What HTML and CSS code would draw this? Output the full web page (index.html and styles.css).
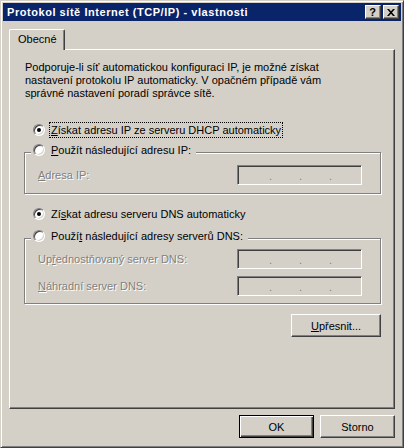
FILE: index.html
```html
<!DOCTYPE html>
<html lang="cs">

<head>
    <meta charset="UTF-8">
    <meta name="viewport" content="width=device-width, initial-scale=1.0">
    <title>Protokol sítě Internet (TCP/IP) - vlastnosti</title>
    <link rel="stylesheet" href="styles.css">
</head>

<body>
    <div class="window">
        <div class="titlebar">
            <span class="title">Protokol sítě Internet (TCP/IP) - vlastnosti</span>
            <div class="tbtns">
                <span class="tbtn help">?</span>
                <span class="tbtn close">
                    <svg width="8" height="7" viewBox="0 0 8 7">
                        <path d="M0 0h2l2 2.2L6 0h2L5 3.5 8 7H6L4 4.8 2 7H0l3-3.5z" fill="#000"/>
                    </svg>
                </span>
            </div>
        </div>

        <div class="client">
            <div class="tabs">
                <div class="tab">Obecné</div>
            </div>

            <div class="panel">
                <p class="intro">Podporuje-li síť automatickou konfiguraci IP, je možné získat nastavení protokolu IP automaticky. V opačném případě vám správné nastavení poradí správce sítě.</p>

                <div class="opt first">
                    <span class="radio checked"></span>
                    <span class="lbl focus"><u>Z</u>ískat adresu IP ze serveru DHCP automaticky</span>
                </div>

                <div class="group g-ip">
                    <div class="opt legend">
                        <span class="radio"></span>
                        <span class="lbl"><u>P</u>oužít následující adresu IP:</span>
                    </div>
                    <div class="field f-ip">
                        <span class="dis"><u>A</u>dresa IP:</span>
                        <div class="ip"><span class="dot">.</span><span class="dot">.</span><span class="dot">.</span></div>
                    </div>
                </div>

                <div class="opt dns-auto">
                    <span class="radio checked"></span>
                    <span class="lbl">Zí<u>s</u>kat adresu serveru DNS automaticky</span>
                </div>

                <div class="group g-dns">
                    <div class="opt legend">
                        <span class="radio"></span>
                        <span class="lbl">Použí<u>t</u> následující adresy serverů DNS:</span>
                    </div>
                    <div class="field f-dns1">
                        <span class="dis">Up<u>ř</u>ednostňovaný server DNS:</span>
                        <div class="ip"><span class="dot">.</span><span class="dot">.</span><span class="dot">.</span></div>
                    </div>
                    <div class="field f-dns2">
                        <span class="dis"><u>N</u>áhradní server DNS:</span>
                        <div class="ip"><span class="dot">.</span><span class="dot">.</span><span class="dot">.</span></div>
                    </div>
                </div>

                <div class="adv-row">
                    <button class="btn adv"><u>U</u>přesnit...</button>
                </div>
            </div>

            <div class="dlg-btns">
                <button class="btn default">OK</button>
                <button class="btn">Storno</button>
            </div>
        </div>
    </div>
</body>

</html>
```

FILE: styles.css
```css
* {
    margin: 0;
    padding: 0;
    box-sizing: border-box;
}

body {
    background-color: #d4d0c8;
    font-family: "Liberation Sans", Arial, sans-serif;
    font-size: 11px;
    color: #000;
}

u {
    text-decoration: underline;
    text-underline-offset: 1px;
}

/* okno */
.window {
    width: 404px;
    height: 448px;
    border: 1px solid;
    border-color: #d4d0c8 #404040 #404040 #d4d0c8;
    box-shadow: inset 1px 1px #fff, inset -1px -1px #808080;
    padding: 2px;
    background-color: #d4d0c8;
    display: flex;
    flex-direction: column;
}

.titlebar {
    height: 18px;
    background-color: #0a246a;
    color: #fff;
    display: flex;
    align-items: center;
    padding: 0 2px 0 2px;
}

.title {
    flex: 1;
    font-weight: bold;
    letter-spacing: 0.55px;
    padding-left: 2px;
    line-height: 18px;
}

.tbtns {
    display: flex;
    gap: 2px;
}

.tbtn {
    width: 16px;
    height: 14px;
    border: 1px solid;
    border-color: #fff #404040 #404040 #fff;
    box-shadow: inset -1px -1px #808080;
    background-color: #d4d0c8;
    color: #000;
    display: flex;
    align-items: center;
    justify-content: center;
}

.tbtn.help {
    font-weight: bold;
    font-size: 11px;
    line-height: 12px;
    padding-right: 1px;
}

.tbtn.close svg {
    display: block;
    margin-right: 1px;
}

/* klientska oblast */
.client {
    flex: 1;
    padding: 8px 6px 0 6px;
    display: flex;
    flex-direction: column;
}

.tabs {
    display: flex;
}

.tab {
    position: relative;
    z-index: 1;
    height: 21px;
    margin-bottom: -1px;
    padding: 0 7px 0 8px;
    line-height: 19px;
    border: 1px solid;
    border-bottom: none;
    border-color: #fff #404040 #fff #fff;
    border-radius: 2px 2px 0 0;
    box-shadow: inset -1px 0 #808080;
    background-color: #d4d0c8;
}

.panel {
    height: 360px;
    border: 1px solid;
    border-color: #fff #404040 #404040 #fff;
    box-shadow: inset -1px -1px #808080;
    padding: 11px 13px 0 15px;
    display: flex;
    flex-direction: column;
}

.intro {
    line-height: 13px;
    padding-right: 40px;
}

/* prepinace */
.opt {
    display: flex;
    align-items: center;
    height: 16px;
    margin-left: 8px;
}

.opt.first {
    margin-top: 22px;
}

.opt.dns-auto {
    margin-top: 12px;
}

.radio {
    width: 12px;
    height: 12px;
    flex: none;
    border: 1px solid;
    border-color: #808080 #fff #fff #808080;
    border-radius: 50%;
    background-color: #fff;
    box-shadow: inset 1px 1px #404040, inset -1px -1px #d4d0c8;
    display: flex;
    align-items: center;
    justify-content: center;
}

.radio.checked::after {
    content: "";
    width: 4px;
    height: 4px;
    border-radius: 50%;
    background-color: #000;
}

.lbl {
    margin-left: 4px;
    padding: 0 1px;
    line-height: 14px;
    border: 1px dotted transparent;
    white-space: nowrap;
}

.lbl.focus {
    border-color: #000;
}

/* skupiny */
.group {
    margin-left: -1px;
    border: 1px solid #808080;
    box-shadow: inset 1px 1px #fff, 1px 1px #fff;
    display: flex;
    flex-direction: column;
}

.g-ip {
    margin-top: 14px;
    padding-bottom: 8px;
}

.g-dns {
    margin-top: 16px;
    padding-bottom: 7px;
}

.opt.legend {
    align-self: flex-start;
    margin: -11px 0 0 6px;
    padding: 0 3px 0 2px;
    background-color: #d4d0c8;
}

.field {
    display: flex;
    align-items: center;
    justify-content: space-between;
    padding: 0 18px 0 13px;
}

.f-ip {
    margin-top: 7px;
}

.f-dns1 {
    margin-top: 5px;
}

.f-dns2 {
    margin-top: 7px;
}

.dis {
    color: #808080;
    text-shadow: 1px 1px #fff;
}

.ip {
    width: 125px;
    height: 20px;
    border: 1px solid;
    border-color: #808080 #fff #fff #808080;
    box-shadow: inset 1px 1px #404040, inset -1px -1px #d4d0c8;
    display: flex;
    align-items: center;
    padding: 2px 0 0 4px;
    color: #808080;
}

.dot {
    width: 30px;
    text-align: right;
}

/* tlacitka */
.btn {
    height: 23px;
    border: 1px solid;
    border-color: #fff #404040 #404040 #fff;
    box-shadow: inset -1px -1px #808080;
    background-color: #d4d0c8;
    font-family: inherit;
    font-size: 11px;
    color: #000;
}

.btn.default {
    border-color: #000;
    box-shadow: inset 1px 1px #fff, inset -1px -1px #404040, inset -2px -2px #808080;
}

.adv-row {
    display: flex;
    justify-content: flex-end;
    margin-top: 10px;
}

.btn.adv {
    width: 90px;
}

.dlg-btns {
    display: flex;
    justify-content: flex-end;
    gap: 6px;
    margin-top: 6px;
}

.dlg-btns .btn {
    width: 75px;
}
```
